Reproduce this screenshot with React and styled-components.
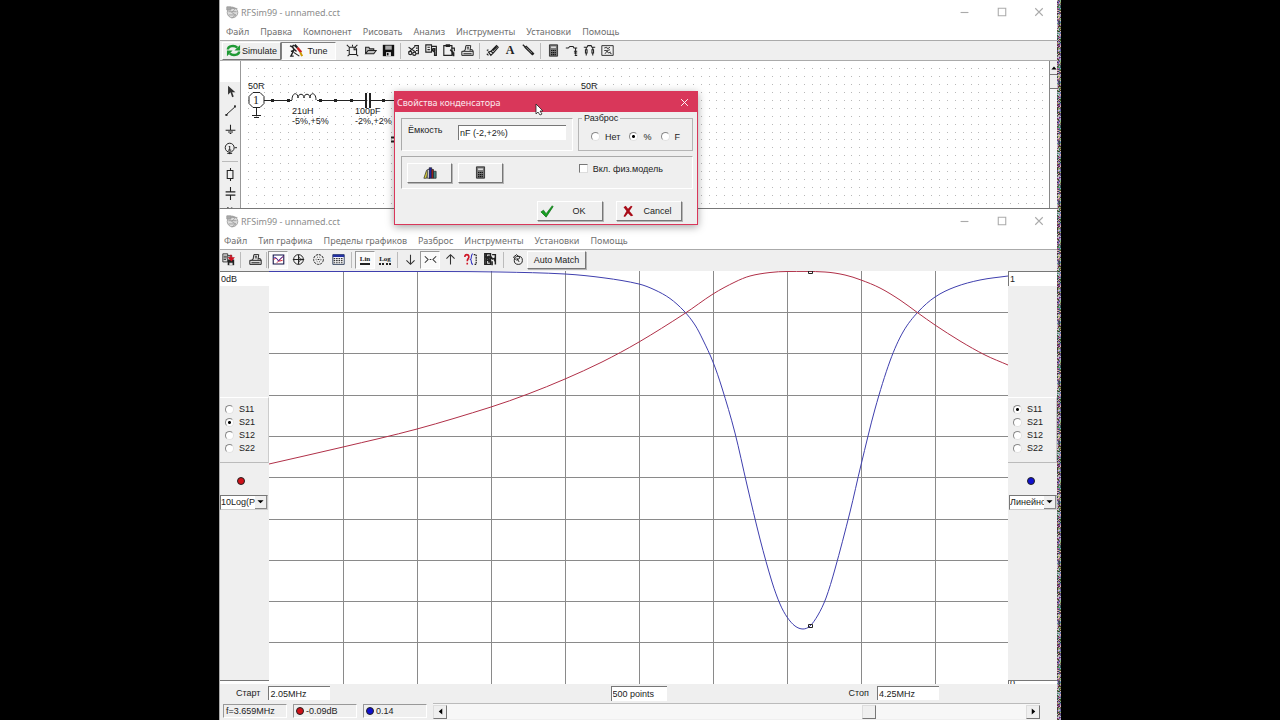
import React from "react";
import styled, { createGlobalStyle, css } from "styled-components";

const GlobalStyle = createGlobalStyle`
  * { box-sizing: border-box; }
  html, body, #root { height: 100%; }
  body { margin: 0; background: #000; overflow: hidden; }
  button, input, select, fieldset, legend { font: inherit; color: inherit; margin: 0; }
`;

const face = "#efefef";
const ui = `9px "Liberation Sans", Arial, sans-serif`;
const segoe = `"Noto Sans", "Open Sans", sans-serif`;

const raised = css`
  border: 1px solid;
  border-color: #fff #777 #777 #fff;
  box-shadow: 1px 1px 0 #b5b5b5;
`;
const sunken = css`
  border: 1px solid;
  border-color: #808080 #fff #fff #808080;
`;

const Page = styled.div`
  min-height: 100%;
  height: 100%;
  display: grid;
  grid-template-columns: 219px minmax(0, 1fr) 4px 219px;
  background: #000;
  font: ${ui};
  color: #222;
`;
const Desktop = styled.main`
  grid-column: 2;
  position: relative;
  min-width: 0;
  display: flex;
  flex-direction: column;
`;
const Noise = styled.svg`
  display: block;
  width: 4px;
  height: 100%;
`;
const Win = styled.section`
  display: flex;
  flex-direction: column;
  min-height: 0;
  flex: ${(p) => (p.$fill ? "1 1 0" : "0 0 209px")};
  background: #fff;
  overflow: hidden;
  border-left: 1px solid #aaa;
  border-bottom: ${(p) => (p.$fill ? 0 : "1px solid #777")};
`;
const TitleBar = styled.header`
  display: flex;
  align-items: center;
  flex: none;
  height: 24px;
  padding: 0 0 0 6px;
  font: 9px ${segoe};
  color: #8c8c8c;
`;
const Title = styled.h1`
  margin: 0;
  padding-left: 2px;
  flex: 1;
  font: inherit;
`;
const Caption = styled.button`
  border: 0;
  padding: 0;
  width: ${(p) => p.$w || 37}px;
  height: 20px;
  background: none;
  color: ${(p) => p.$color || "#aaa"};
  display: grid;
  place-items: center;
`;
const MenuBar = styled.nav`
  display: flex;
  align-items: center;
  flex: none;
  height: 17px;
  gap: 11px;
  padding-left: ${(p) => p.$pad}px;
  font: 9px/16px ${segoe};
  border-bottom: 1px solid #aaa;
`;
const MenuLink = styled.a`
  color: #707070;
  text-decoration: none;
  white-space: nowrap;
`;
const Toolbar = styled.div`
  display: flex;
  align-items: center;
  flex: none;
  height: ${(p) => p.$h}px;
  padding: ${(p) => p.$pad || 0};
  background: ${face};
  border-bottom: ${(p) => (p.$line ? "1px solid #aaa" : 0)};
`;
const Tool = styled.button`
  display: grid;
  place-items: center;
  width: ${(p) => p.$w || 18}px;
  height: ${(p) => p.$h || 18}px;
  padding: 0;
  border: 0;
  background: none;
  flex: none;
  ${(p) => p.$on && css`background: #fafafa; border: 1px solid; border-color: #999 #fff #fff #999;`}
`;
const Split = styled.span`
  width: 1px;
  height: 16px;
  margin: 0 ${(p) => p.$m || 3}px;
  background: #bbb;
  flex: none;
`;
const Spacer = styled.span`
  width: 7px;
  flex: none;
`;
const Wide = styled.button`
  display: flex;
  align-items: center;
  justify-content: center;
  gap: ${(p) => p.$gap || 2}px;
  width: ${(p) => p.$w}px;
  height: ${(p) => p.$h || 18}px;
  padding: 0 ${(p) => p.$end || 0}px 0 0;
  background: ${(p) => (p.$on ? "#f8f8f8" : face)};
  white-space: nowrap;
  flex: none;
  ${(p) => (p.$on ? sunken : raised)}
`;

/* schematic window */
const Work = styled.div`
  display: flex;
  flex: 1;
  min-height: 0;
`;
const Palette = styled.aside`
  display: flex;
  flex-direction: column;
  align-items: center;
  width: 21px;
  flex: none;
  padding-top: 21px;
  background: linear-gradient(#fff 21px, ${face} 21px);
  border-right: 1px solid #999;
  overflow: hidden;
`;
const PaletteRule = styled.span`
  width: 16px;
  height: 1px;
  margin: 3px 0;
  background: #bbb;
  flex: none;
`;
const Sheet = styled.svg`
  flex: 1;
  min-width: 0;
  height: 100%;
  display: block;
`;
const VScroll = styled.div`
  width: 8px;
  flex: none;
  background: #f7f7f7;
  border-left: 1px solid #888;
  display: flex;
  flex-direction: column;
`;
const VButton = styled.button`
  height: 14px;
  padding: 0;
  border: 0;
  border-bottom: 1px solid #777;
  background: ${face};
  display: grid;
  place-items: center end;
`;

/* graph window */
const GraphArea = styled.div`
  display: flex;
  flex: 1;
  min-height: 0;
`;
const AxisPanel = styled.aside`
  display: flex;
  flex-direction: column;
  width: 49px;
  flex: none;
  background: ${face};
  overflow: hidden;
`;
const Field = styled.input`
  width: ${(p) => (p.$w ? p.$w + "px" : "100%")};
  height: ${(p) => p.$h || 15}px;
  padding: 0 0 0 1px;
  border: 0;
  border-top: 1px solid #777;
  border-left: 1px solid #777;
  border-radius: 0;
  background: #fff;
  outline: 0;
  flex: none;
`;
const AxisField = styled(Field)`
  border-left: ${(p) => (p.$right ? "1px solid #777" : 0)};
`;
const AxisGap = styled.div`
  flex: ${(p) => p.$n} 1 0;
`;
const Traces = styled.fieldset`
  border: 0;
  border-top: 1px solid #fff;
  border-right: 1px solid #ccc;
  border-bottom: 1px solid #bbb;
  min-width: 0;
  padding: 5px 0 7px 5px;
  display: flex;
  flex-direction: column;
`;
const Choice = styled.label`
  display: flex;
  align-items: center;
  gap: 5px;
  height: 13px;
  white-space: nowrap;
`;
const Radio = styled.input.attrs({ type: "radio" })`
  appearance: none;
  width: 9px;
  height: 9px;
  border-radius: 50%;
  border: 1px solid;
  border-color: #888 #e2e2e2 #e2e2e2 #888;
  background: #fff;
  &:checked { background: radial-gradient(#000 0 1px, #fff 2px); }
`;
const Swatch = styled.span`
  width: 8px;
  height: 8px;
  border-radius: 50%;
  border: 1px solid #222;
  background: ${(p) => p.$c};
  flex: none;
`;
const SwatchRow = styled.div`
  height: 32px;
  display: grid;
  place-items: center;
  padding: 5px ${(p) => (p.$right ? 3 : 8)}px 0 0;
`;
const Combo = styled.div`
  display: grid;
  grid-template-columns: minmax(0, 1fr) 12px;
  height: 15px;
  margin: ${(p) => (p.$right ? "0 0 0 1px" : "0 1px 0 0")};
  border: 1px solid;
  border-color: #777 #ccc #ccc #777;
  background: #fff;
  flex: none;
`;
const Select = styled.select`
  grid-area: 1 / 1 / 2 / 2;
  appearance: none;
  width: 100%;
  border: 0;
  padding: 0;
  border-radius: 0;
  background: none;
  outline: 0;
`;
const ComboArrow = styled.span`
  display: grid;
  place-items: center;
  background: ${face};
  border-right: 1px solid #888;
  border-bottom: 1px solid #888;
  pointer-events: none;
`;
const Plot = styled.svg`
  flex: 1;
  min-width: 0;
  height: 100%;
  display: block;
  background: #fff;
`;
const RangeRow = styled.div`
  display: grid;
  grid-template-columns: 1fr auto 1fr;
  align-items: center;
  flex: none;
  height: 18px;
  background: ${face};
`;
const Pair = styled.label`
  display: flex;
  align-items: center;
  gap: 8px;
  padding: ${(p) => p.$pad};
  justify-self: ${(p) => p.$side || "start"};
`;
const Status = styled.footer`
  display: flex;
  align-items: center;
  flex: none;
  height: 18px;
  padding: 0 17px 0 3px;
  gap: 6px;
  background: ${face};
`;
const Cell = styled.output`
  display: flex;
  align-items: center;
  gap: 2px;
  width: 64px;
  height: 14px;
  padding-left: 2px;
  border: 1px solid;
  border-color: #999 #fff #fff #999;
  white-space: nowrap;
  flex: none;
`;
const HScroll = styled.div`
  display: flex;
  flex: 1;
  height: 16px;
  align-items: center;
  border-top: 1px solid #bbb;
  background: #f7f7f7;
`;
const ArrowButton = styled.button`
  width: 14px;
  height: 14px;
  padding: 0;
  display: grid;
  place-items: center;
  background: ${face};
  border: 1px solid;
  border-color: #ddd #777 #777 #ddd;
  flex: none;
`;
const Slider = styled.input.attrs({ type: "range" })`
  appearance: none;
  flex: 1;
  min-width: 0;
  height: 14px;
  background: transparent;
  &::-webkit-slider-thumb {
    appearance: none;
    width: 14px;
    height: 14px;
    background: ${face};
    border: 1px solid;
    border-color: #ddd #777 #777 #ddd;
  }
`;

/* dialog */
const Dialog = styled.div`
  position: absolute;
  top: 91px;
  left: 175px;
  width: 304px;
  background: ${face};
  border: 1px solid #d9375a;
  box-shadow: 0 2px 8px rgba(0, 0, 0, 0.35);
`;
const DialogTitle = styled.header`
  display: flex;
  align-items: center;
  justify-content: space-between;
  height: 20px;
  padding: 0 5px 0 2px;
  background: #d9375a;
  color: #fbe8ed;
  font: 9px ${segoe};
`;
const DialogBody = styled.form`
  display: flex;
  flex-direction: column;
  gap: 5px;
  padding: 0 4px 3px 6px;
`;
const DialogRow = styled.div`
  display: flex;
  align-items: flex-end;
  gap: 5px;
`;
const Groove = styled.div`
  display: flex;
  align-items: center;
  flex: 1;
  gap: ${(p) => p.$gap || 0}px;
  height: 33px;
  padding: ${(p) => p.$pad};
  border: 1px solid;
  border-color: #aaa #fff #fff #aaa;
`;
const Spread = styled.fieldset`
  width: 115px;
  height: 39px;
  min-width: 0;
  padding: 6px 12px 0 12px;
  border: 1px solid #b5b5b5;
`;
const Legend = styled.legend`
  height: 12px;
  line-height: 12px;
  padding: 0 2px;
  margin-left: -9px;
`;
const Choices = styled.div`
  display: flex;
  justify-content: space-between;
`;
const Capacity = styled.label`
  display: flex;
  flex: 1;
  justify-content: space-between;
`;
const Check = styled.input.attrs({ type: "checkbox" })`
  appearance: none;
  width: 9px;
  height: 9px;
  background: #fff;
  border: 1px solid;
  border-color: #777 #ddd #ddd #777;
`;
const CheckLabel = styled(Choice)`
  margin: 5px 29px 0 auto;
  align-self: flex-start;
`;
const Actions = styled.div`
  display: flex;
  justify-content: flex-end;
  gap: 13px;
  padding: 7px 11px 0 0;
`;
const Pointer = styled.svg`
  position: absolute;
  top: 11px;
  left: 140px;
`;

const shapes = {
  app: <g fill="none" stroke="#999"><circle cx="8" cy="8" r="6.5" fill="#ddd" /><path d="M2 3h12M3 7h10M3 11h9M7 1l4 3-4 4 5 3-5 4" /><path d="M1 1h5v4H1z" fill="#aaa" /></g>,
  sim: <g fill="none" stroke="#1f9a35" strokeWidth="2.6"><path d="M2 7c0-4 7-5 10-2M14 9c0 4-7 5-10 2" /><path d="M15 2v6H9zM1 14V8h6z" fill="#1f9a35" stroke="none" /></g>,
  tune: <g fill="none"><path d="M1 3l3 1 1 3M5 2l-2 3M5 6l3 3M2 9l3-1-3 6h3" stroke="#222" strokeWidth="1.5" /><path d="M6 2l3 3" stroke="#222" strokeWidth="2.4" /><path d="M9 5l4 5" stroke="#c22" strokeWidth="2.6" /><path d="M12 10l2 4" stroke="#c90" strokeWidth="2.2" /><path d="M5 10l6 4" stroke="#222" strokeWidth="1.2" /></g>,
  fresh: <path d="M4 4v9h9V6l-2-2zM4 4L1 1M8 3V1M11 4l3-3M3 8H1M4 13l-2 2M13 13l2 2M10 4v3h3" fill="none" stroke="#222" strokeWidth="1.3" />,
  open: <path d="M2 12V4h4l1 2h5v2M2 12l3-4h10l-3 4z" fill="#bbb" stroke="#222" strokeWidth="1.3" />,
  save: <g><path d="M1 1h14v14H1z" fill="#111" /><path d="M4 2h8v5H4z" fill="#aaa" /><path d="M5 10h6v5H5z" fill="#ddd" /><path d="M6 11h2v3H6z" fill="#111" /></g>,
  cut: <g fill="none" stroke="#222" strokeWidth="1.4"><path d="M2 4l9 6M2 10l8-7" /><circle cx="4" cy="11" r="2" /><circle cx="9" cy="12" r="2" /><path d="M9 2h5v10h-3M11 5h2M11 8h2" /></g>,
  copy: <g fill="none" stroke="#222" strokeWidth="1.4"><path d="M1 1h7v9H1zM8 3h6v11h-3M3 4h3M3 7h3" /><path d="M8 7l4 3v4M9 6h3v3" strokeWidth="2" /></g>,
  paste: <g fill="none" stroke="#222" strokeWidth="1.4"><path d="M1 2h10v12H1zM4 1h4v2H4zM10 5h4v4" /><path d="M9 7l3 3v4M13 10v5" strokeWidth="2" /></g>,
  print: <g fill="#ddd" stroke="#222" strokeWidth="1.2"><path d="M1 9h14v5H1zM3 9l2-2h9l1 2" /><path d="M5 8l1-6h6l-1 6" fill="#fff" /><path d="M7 4h3M7 6h3M3 12h10" /></g>,
  spray: <g fill="none" stroke="#222" strokeWidth="1.4"><path d="M6 9l7-7 2 2-6 7zM6 9l-3 1 3 4 3-3M1 12l2 2M3 7L1 8" /><path d="M8 8l5-5" strokeWidth="2.4" /></g>,
  pencil: <g fill="none" stroke="#222"><path d="M1 1l13 12" strokeWidth="1.6" /><path d="M4 3l10 10" strokeWidth="3.6" /><path d="M5 4l7 7" stroke="#ccc" strokeWidth=".8" /></g>,
  calc: <g><path d="M3 1h10v14H3z" fill="#777" stroke="#222" /><path d="M5 3h6v2H5z" fill="#ddd" /><path d="M5 8h6M5 10.500h6M5 13h6" stroke="#111" strokeDasharray="1.500 .7" strokeWidth="1.5" /></g>,
  sres: <path d="M1 5h3l2-2h4l1 2h4M13 5v8M11 9h4M11 11h4M12 14h3" fill="none" stroke="#222" strokeWidth="1.3" />,
  pi: <path d="M1 4h4l1-2h4l1 2h4M4 4v3M3 7h2v4H3zM4 11v3M12 4v3M11 7h2v4h-2zM12 11v3" fill="none" stroke="#222" strokeWidth="1.3" />,
  tool: <path d="M1 2h14v12H1zM4 5l3-1 1 2 3-2M4 8h3l2 3 3-1M5 12l3-4 3-1M11 11l2 1" fill="none" stroke="#222" strokeWidth="1.1" />,
  arrow: <path d="M5 1v11l3-3 2 6 2-1-2-5h4z" fill="#333" />,
  line: <path d="M3 13l10-9M2 13h2v1H2zM13 2h1v2h-1z" fill="none" stroke="#222" strokeWidth="1.2" />,
  gnd: <path d="M8 2v7M2 9h12M5 11h6M7 13h2" fill="none" stroke="#222" strokeWidth="1.3" />,
  port: <g fill="none" stroke="#222" strokeWidth="1.2"><circle cx="7" cy="7" r="5.500" /><path d="M13 7h3M7 12v3M4 14h6M6 6l1-1v5M5 10h4" /></g>,
  res: <path d="M8 0v3M4 3h7v10H4zM8 13v3" fill="none" stroke="#222" strokeWidth="1.3" />,
  cap: <path d="M8 0v6M2 6h12M2 10h12M8 10v6" fill="none" stroke="#222" strokeWidth="1.3" />,
  diag: <path d="M4 2l8 6M9 2l3 6" fill="none" stroke="#222" strokeWidth="2" />,
  export: <g><path d="M1 1h6v10H1zM7 3h5v4" fill="#ddd" stroke="#222" /><path d="M2 4h4M2 6h4M2 8h3M8 5h3" stroke="#222" /><path d="M7 8h8v7H7z" fill="#222" /><path d="M11 2v5M9 6h5l-2.500 3z" stroke="#d01020" fill="#d01020" strokeWidth="1.800" /><path d="M9 12h4v3H9z" fill="#ddd" /></g>,
  graph: <g fill="none"><path d="M1.500 2.500h13v11h-13z" stroke="#114" fill="#fff" strokeWidth="1.300" /><path d="M2 8l3-2 4 4 4-1M6 12l8-8" stroke="#d02030" strokeWidth="1.200" /><path d="M2 5l3 1 3 4 2-3 4-3" stroke="#2a2ab0" /></g>,
  smith: <g fill="none" stroke="#222" strokeWidth="1.200"><circle cx="8" cy="8" r="6" /><path d="M1 8h14M8 2v12M8 4c1 3 3 4 6 4M8 12c1-3 3-4 6-4" /></g>,
  polar: <g fill="none" stroke="#222" strokeWidth="1.200"><circle cx="8" cy="8" r="6" strokeDasharray="3 1" /><circle cx="8" cy="8" r="3" strokeDasharray="1 2" /><path d="M7 8h2" /></g>,
  table: <g><path d="M1 2h14v12H1z" fill="#fff" stroke="#124" /><path d="M1 2h14v3H1z" fill="#2230a0" /><path d="M2 7h12M2 9.500h12M2 12h12" stroke="#333" strokeDasharray="2 1" strokeWidth="1.500" /></g>,
  down: <path d="M8 2v12M3 9l5 5 5-5" fill="none" stroke="#333" strokeWidth="1.300" />,
  up: <path d="M8 14V2M3 7l5-5 5 5" fill="none" stroke="#333" strokeWidth="1.300" />,
  fit: <path d="M1 4l4 4-4 4M15 4l-4 4 4 4M7 8h2" fill="none" stroke="#333" strokeWidth="1.300" />,
  query: <g fill="none"><path d="M1 5c0-4 5-4 5 0 0 2-2 2-2 5M4 12v2" stroke="#d01828" strokeWidth="2" /><path d="M11 1c-3 0-1 6-3 7 2 1 0 6 3 6" stroke="#3333c0" strokeWidth="1.300" /><path d="M12 2h3v12h-3" stroke="#222" strokeWidth="1.500" strokeDasharray="2 1" /></g>,
  mesh: <g fill="none" stroke="#222" strokeWidth="1.800"><path d="M1 1h7v13H1zM10 2h4v12M3 1v13M6 3v9M1 5h7M2 9h6M8 4l3 4M12 6l2 5M10 10v5" /><path d="M2 3l6 8" /></g>,
  marker: <g fill="none" stroke="#222" strokeWidth="1.200"><circle cx="9" cy="9" r="5" /><path d="M3 5l4-3 4 4-4 3zM7 6l3 5" /></g>,
  books: <g stroke="#222" strokeWidth=".8"><path d="M1 14l3-9 2 1-2 8z" fill="#d8d040" /><path d="M5 4h3v10H5z" fill="#fff" /><path d="M7 2h3v12H7z" fill="#2020a0" /><path d="M10 4h2v10h-2z" fill="#b02020" /><path d="M12 6h3v8h-3z" fill="#408080" /></g>,
  ok: <path d="M1 9l3-2 3 4 7-9 1 1-8 12z" fill="#15a020" stroke="#0a6512" strokeWidth=".7" />,
  no: <path d="M2 3l3-2 3 4 4-4 2 1-4 6 5 6-3 1-4-4-4 5-2-1 4-7z" fill="#a80c18" />,
  x: <path d="M2 2l12 12M14 2L2 14" fill="none" stroke="currentColor" strokeWidth="1.700" />,
  min: <path d="M1 8h14" stroke="currentColor" strokeWidth="2" />,
  max: <path d="M2 2h12v12H2z" fill="none" stroke="currentColor" strokeWidth="1.700" />,
  triDown: <path d="M1 5h14l-7 7z" />,
  triUp: <path d="M1 12h14L8 4z" />,
  triLeft: <path d="M12 1v14L4 8z" />,
  triRight: <path d="M4 1v14l8-7z" />,
};

const Icon = ({ n, s = 13 }) => (
  <svg width={s} height={s} viewBox="0 0 16 16" aria-hidden="true">{shapes[n]}</svg>
);

const Letter = styled.span`
  font: bold 12px "Liberation Serif", serif;
`;
const ScaleText = styled.span`
  font: bold 7px/8px "Liberation Serif", serif;
  border-bottom: 2px ${(p) => (p.$solid ? "solid" : "dotted")} #222;
`;

function TitleRow() {
  return (
    <TitleBar>
      <Icon n="app" s={13} />
      <Title>RFSim99 - unnamed.cct</Title>
      <Caption aria-label="Minimize"><Icon n="min" s={9} /></Caption>
      <Caption aria-label="Maximize"><Icon n="max" s={10} /></Caption>
      <Caption aria-label="Close"><Icon n="x" s={10} /></Caption>
    </TitleBar>
  );
}

const Menu = ({ items, pad }) => (
  <MenuBar $pad={pad}>
    {items.map((t) => <MenuLink key={t} href="#">{t}</MenuLink>)}
  </MenuBar>
);

const Tools = ({ names, w, h, on }) =>
  names.map((n) => <Tool key={n} $w={w} $h={h} $on={n === on} aria-label={n}><Icon n={n} /></Tool>);

/* dots of the drawing sheet, as one path */
const sheetDots = (() => {
  let d = "";
  for (let r = 0; r < 19; r++)
    for (let c = 0; c < 240; c++)
      d += `M${Math.round(7 + c * 7.94)} ${Math.round(7 + r * 7.94) + 0.5}h1`;
  return d;
})();

function Schematic() {
  return (
    <Sheet>
      <path d={sheetDots} stroke="#b8b8b8" />
      <g transform="translate(-241 -61)" fill="none" stroke="#222">
        <path d="M253 92.500h7l4 4v7l-4 4h-7l-4-4v-7z" fill="#fff" />
        <path d="M264 100.500h28M317 100.500h48M370 100.500h30M256.500 108v7M252 115.500h9M254 117.500h5" />
        <path d="M292 100c0-8 6-8 6-2 0-5 6-5 6 0 0-5 6-5 6 0 0-6 6-6 6 2" />
        <path d="M366 93v15M370 93v15" strokeWidth="2" />
        <path d="M391 137.500h6M391 141.500h6" strokeWidth="2" />
        <path d="M271 100.500h3M287 100.500h3M319 100.500h3M334 100.500h3M350 100.500h3M382 100.500h3" strokeWidth="3" />
        <g fill="#222" stroke="none" fontSize="9">
          <text x="248" y="89">50R</text>
          <text x="253" y="104" fontSize="12" fontFamily="Liberation Serif">1</text>
          <text x="292" y="114">21uH</text>
          <text x="292" y="124">-5%,+5%</text>
          <text x="355" y="114">100pF</text>
          <text x="355" y="124">-2%,+2%</text>
          <text x="581" y="89">50R</text>
        </g>
      </g>
    </Sheet>
  );
}

const red = [[269,464],[343,447],[417,429],[491,407],[528,394],[565,379],[602,362],[639,342],[684,314],[713,294],[735,282],[750,276],[770,272.5],[787,271.5],[825,272],[845,275],[861,280],[880,288],[900,300],[918,313],[935,325],[960,341],[985,355],[1008,365]];
const blue = [[269,271.5],[440,271.5],[500,272],[565,274],[605,278],[639,284],[655,290],[670,298.5],[684,311],[695,325],[703,340],[713,362],[722,388],[735,433],[747,485],[760,539],[772,582],[780,604],[787,617],[795,626],[803,629],[810,626],[818,615],[826,598],[835,569],[850,512],[861,465],[875,409],[890,361],[903,332],[918,312],[935,297],[955,287],[980,280],[1008,276]];

const smooth = (p) => {
  let d = `M${p[0]}`;
  for (let i = 0; i < p.length - 1; i++) {
    const a = p[i - 1] || p[i], b = p[i], c = p[i + 1], e = p[i + 2] || c;
    const k = (c[0] - b[0]) / 3;
    const m1 = (c[1] - a[1]) / (c[0] - a[0]);
    const m2 = (e[1] - b[1]) / (e[0] - b[0]);
    d += `C${b[0] + k} ${b[1] + m1 * k} ${c[0] - k} ${c[1] - m2 * k} ${c[0]} ${c[1]}`;
  }
  return d;
};

function Chart() {
  return (
    <Plot viewBox="269 271 739 413" preserveAspectRatio="none">
      <g fill="none" stroke="#8a8a8a">
        {Array.from({ length: 9 }, (_, i) => (
          <React.Fragment key={i}>
            <path d={`M${343.5 + i * 74} 271v413`} />
            <path d={`M269 ${Math.round(312 + i * 41.3) + 0.5}h739`} />
          </React.Fragment>
        ))}
      </g>
      <g fill="none" strokeWidth="1">
        <path d={smooth(blue)} stroke="#3f3fae" />
        <path d={smooth(red)} stroke="#b03048" />
        <path d="M808.500 271v2.500h4V271zM808.500 624.500h4v3h-4z" stroke="#222" />
      </g>
    </Plot>
  );
}

function Axis({ right, top, bottom, side, active, color, scale }) {
  return (
    <AxisPanel>
      <AxisField $right={right} aria-label={side + " top"} defaultValue={top} />
      <AxisGap $n={112} />
      <Traces aria-label={side + " trace"}>
        {["S11", "S21", "S12", "S22"].map((s) => (
          <Choice key={s}><Radio name={side} defaultChecked={s === active} />{s}</Choice>
        ))}
      </Traces>
      <SwatchRow $right={right}><Swatch $c={color} /></SwatchRow>
      <Combo $right={right}>
        <Select aria-label={side + " scale"}><option>{scale}</option></Select>
        <ComboArrow><Icon n="triDown" s={7} /></ComboArrow>
      </Combo>
      <AxisGap $n={172} />
      <AxisField $right={right} $h={4} aria-label={side + " bottom"} defaultValue={bottom} />
    </AxisPanel>
  );
}

function CapacitorDialog() {
  return (
    <Dialog role="dialog" aria-label="Свойства конденсатора">
      <DialogTitle>
        Свойства конденсатора
        <Caption $w={16} $color="#fff" aria-label="Close"><Icon n="x" s={9} /></Caption>
      </DialogTitle>
      <DialogBody onSubmit={(e) => e.preventDefault()}>
        <DialogRow>
          <Groove $pad="0 6px 5px 6px">
            <Capacity>Ёмкость<Field $w={108} defaultValue="nF (-2,+2%)" /></Capacity>
          </Groove>
          <Spread>
            <Legend>Разброс</Legend>
            <Choices>
              <Choice><Radio name="tol" />Нет</Choice>
              <Choice><Radio name="tol" defaultChecked />%</Choice>
              <Choice><Radio name="tol" />F</Choice>
            </Choices>
          </Spread>
        </DialogRow>
        <DialogRow>
          <Groove $pad="0 0 0 5px" $gap={6}>
            <Wide type="button" $w={45} $h={20} aria-label="Library"><Icon n="books" s={14} /></Wide>
            <Wide type="button" $w={45} $h={20} aria-label="Calculator"><Icon n="calc" s={13} /></Wide>
            <CheckLabel><Check />Вкл. физ.модель</CheckLabel>
          </Groove>
        </DialogRow>
        <Actions>
          <Wide $w={66} $h={20} $gap={18} $end={14}><Icon n="ok" s={14} />OK</Wide>
          <Wide type="button" $w={66} $h={20} $gap={9} $end={4}><Icon n="no" s={12} />Cancel</Wide>
        </Actions>
      </DialogBody>
      <Pointer width="9" height="13" viewBox="0 0 9 13">
        <path d="M1 1v10l2-2 2 3 2-1-2-3h3z" fill="#fff" stroke="#222" strokeWidth=".8" />
      </Pointer>
    </Dialog>
  );
}

/* coloured speckle along the right screen edge */
const speckle = (() => {
  let s = 7;
  const rnd = () => (s = (s * 16807) % 2147483647) / 2147483647;
  return Array.from({ length: 4 * 60 }, (_, i) => ({
    x: i % 4,
    y: Math.floor(i / 4),
    c: `hsl(${Math.floor(rnd() * 360)} 30% ${Math.floor(20 + rnd() * 60)}%)`,
  }));
})();

export default function App() {
  return (
    <Page>
      <GlobalStyle />
      <Desktop>
        <Win>
          <TitleRow />
          <Menu pad={6} items={["Файл", "Правка", "Компонент", "Рисовать", "Анализ", "Инструменты", "Установки", "Помощь"]} />
          <Toolbar $h={20} $pad="0 0 0 2px" $line>
            <Wide $w={59} $gap={1}><Icon n="sim" s={15} />Simulate</Wide>
            <Wide $w={55} $gap={3} $on><Icon n="tune" s={15} />Tune</Wide>
            <Spacer />
            <Tools names={["fresh", "open", "save"]} />
            <Split />
            <Tools names={["cut", "copy", "paste", "print"]} />
            <Split />
            <Tools names={["spray"]} />
            <Tool aria-label="text"><Letter>A</Letter></Tool>
            <Tools names={["pencil"]} />
            <Split />
            <Tools names={["calc", "sres", "pi", "tool"]} />
          </Toolbar>
          <Work>
            <Palette>
              <Tools names={["arrow", "line", "gnd", "port"]} h={19} />
              <PaletteRule />
              <Tools names={["res", "cap", "diag"]} h={19} />
            </Palette>
            <Schematic />
            <VScroll>
              <VButton aria-label="Scroll up"><Icon n="triUp" s={6} /></VButton>
              <VButton aria-label="Scroll thumb" />
            </VScroll>
          </Work>
        </Win>
        <Win $fill>
          <TitleRow />
          <Menu pad={4} items={["Файл", "Тип графика", "Пределы графиков", "Разброс", "Инструменты", "Установки", "Помощь"]} />
          <Toolbar $h={21} $pad="0 0 2px 0">
            <Tools names={["export"]} w={16} />
            <Split $m={4} />
            <Tools names={["print"]} w={20} />
            <Split $m={1} />
            <Tools names={["graph", "smith", "polar", "table"]} w={20} on="graph" />
            <Split $m={3} />
            <Tool $w={20} $on><ScaleText $solid>Lin</ScaleText></Tool>
            <Tool $w={20}><ScaleText>Log</ScaleText></Tool>
            <Split $m={2} />
            <Tools names={["down", "fit", "up", "query", "mesh"]} w={20} on="fit" />
            <Split $m={3} />
            <Tools names={["marker"]} w={20} />
            <Wide $w={59}>Auto Match</Wide>
          </Toolbar>
          <GraphArea>
            <Axis side="Left" top="0dB" bottom="" active="S21" color="#d01018" scale="10Log(P')" />
            <Chart />
            <Axis right side="Right" top="1" bottom="0" active="S11" color="#1010d0" scale="Линейно" />
          </GraphArea>
          <RangeRow>
            <Pair $pad="0 0 0 16px">Старт<Field $w={62} $h={14} defaultValue="2.05MHz" /></Pair>
            <Field $w={56} aria-label="Points" defaultValue="500 points" />
            <Pair $side="end" $pad="0 118px 0 0">Стоп<Field $w={62} $h={14} defaultValue="4.25MHz" /></Pair>
          </RangeRow>
          <Status>
            <Cell>f=3.659MHz</Cell>
            <Cell><Swatch $c="#d01018" />-0.09dB</Cell>
            <Cell><Swatch $c="#1010d0" />0.14</Cell>
            <HScroll>
              <ArrowButton aria-label="Previous"><Icon n="triLeft" s={7} /></ArrowButton>
              <Slider aria-label="Frequency point" min="0" max="500" defaultValue="367" />
              <ArrowButton aria-label="Next"><Icon n="triRight" s={7} /></ArrowButton>
            </HScroll>
          </Status>
        </Win>
        <CapacitorDialog />
      </Desktop>
      <Noise aria-hidden="true">
        <pattern id="speckle" width="4" height="60" patternUnits="userSpaceOnUse">
          {speckle.map((p) => <rect key={p.x + "-" + p.y} x={p.x} y={p.y} width="1" height="1" fill={p.c} />)}
        </pattern>
        <rect width="4" height="100%" fill="url(#speckle)" />
      </Noise>
    </Page>
  );
}
